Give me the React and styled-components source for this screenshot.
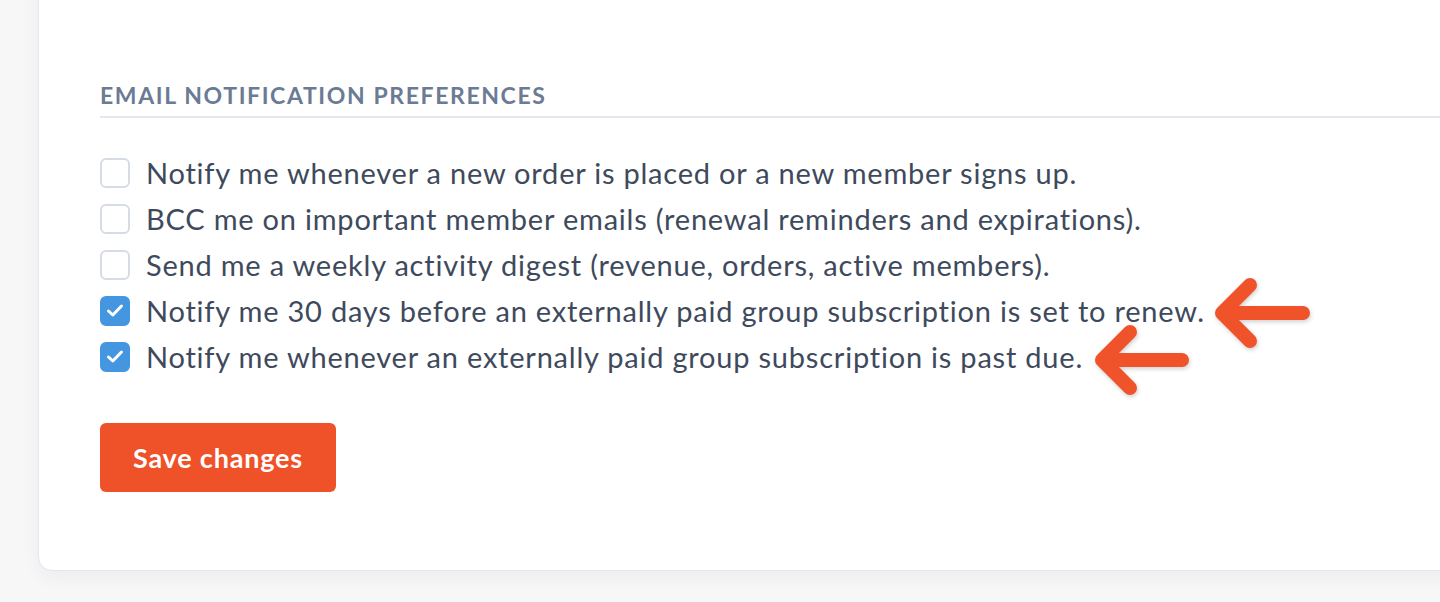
import React from "react";
import styled, { createGlobalStyle } from "styled-components";

const Global = createGlobalStyle`
  html, body { margin: 0; padding: 0; background: #f7f7f8; }
  body { font-family: "Lato", "Open Sans", sans-serif; overflow: hidden; }
`;

const Page = styled.div`
  width: 1440px;
  height: 602px;
  padding-left: 38px;
  box-sizing: border-box;
  position: relative;
  overflow: hidden;
`;

const Card = styled.section`
  margin-top: -30px;
  height: 601px;
  width: 1440px;
  box-sizing: border-box;
  background: #fff;
  border: 1.5px solid #e2e6ef;
  border-radius: 14px;
  box-shadow: 0 6px 18px rgba(30, 40, 60, 0.05);
  padding: 111px 0 0 61px;
`;

const Heading = styled.h3`
  margin: 0;
  font-size: 23px;
  font-weight: 700;
  letter-spacing: 0.07em;
  color: #6b7b94;
  text-transform: uppercase;
  line-height: 26px;
  padding-bottom: 8px;
  border-bottom: 2px solid #e3e7f0;
`;

const List = styled.ul`
  list-style: none;
  margin: 0;
  padding: 40px 0 0 0;
  display: flex;
  flex-direction: column;
  gap: 17px;
`;

const Row = styled.li`
  display: flex;
  align-items: center;
  gap: 16px;
  height: 29px;
`;

const Box = styled.span`
  width: 30px;
  height: 30px;
  box-sizing: border-box;
  border-radius: 6px;
  flex: none;
  display: flex;
  align-items: center;
  justify-content: center;
  background: ${(p) => (p.$checked ? "#4596e0" : "#fff")};
  border: 2px solid ${(p) => (p.$checked ? "#4596e0" : "#d6dce6")};
`;

const Label = styled.span`
  font-size: 29px;
  color: #3e4a5c;
  letter-spacing: 0.027em;
  white-space: nowrap;
`;

const Button = styled.button`
  margin-top: 52px;
  width: 236px;
  height: 69px;
  border: none;
  border-radius: 6px;
  background: #ef5128;
  color: #fff;
  font-family: "Lato", sans-serif;
  font-weight: 700;
  font-size: 27px;
  letter-spacing: 0.03em;
`;

const Arrow = styled.svg`
  position: absolute;
  left: 0;
  top: 0;
  pointer-events: none;
  filter: drop-shadow(1px 2px 2px rgba(0, 0, 0, 0.18));
`;

const CheckMark = styled.svg`
  display: block;
  width: 18px;
  height: 15px;
`;

const Check = () => (
  <CheckMark viewBox="0 0 18 15">
    <path d="M2.5 8 L6.8 12 L15.5 3" fill="none" stroke="#fff" strokeWidth="3" strokeLinecap="round" strokeLinejoin="round" />
  </CheckMark>
);

const items = [
  ["Notify me whenever a new order is placed or a new member signs up.", false],
  ["BCC me on important member emails (renewal reminders and expirations).", false],
  ["Send me a weekly activity digest (revenue, orders, active members).", false],
  ["Notify me 30 days before an externally paid group subscription is set to renew.", true],
  ["Notify me whenever an externally paid group subscription is past due.", true],
];

export default function App() {
  return (
    <Page>
      <Global />
      <Card>
        <Heading>Email notification preferences</Heading>
        <List>
          {items.map(([t, c]) => (
            <Row key={t}>
              <Box $checked={c}>{c && <Check />}</Box>
              <Label>{t}</Label>
            </Row>
          ))}
        </List>
        <Button>Save changes</Button>
      </Card>
      <Arrow width="1440" height="602" viewBox="0 0 1440 602">
        <g fill="none" stroke="#f0522a" strokeWidth="14" strokeLinecap="round" strokeLinejoin="round">
          <path d="M1303 313 L1222 313 M1250 285 L1222 313 L1250 341" />
          <path d="M1182 360 L1102 360 M1130 332 L1102 360 L1130 388" />
        </g>
      </Arrow>
    </Page>
  );
}
